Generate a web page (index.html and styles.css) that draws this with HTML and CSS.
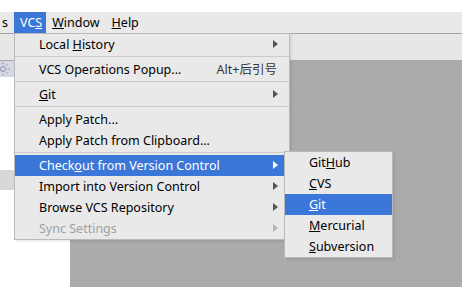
FILE: index.html
```html
<!DOCTYPE html>
<html lang="en">
<head>
  <meta charset="UTF-8">
  <title>VCS menu</title>
<link rel="stylesheet" href="styles.css">
</head>
<body>
  <div class="window">
    <div class="top-gap"></div>
    <div class="menubar">
      <span class="mb-item cut">s</span>
      <span class="mb-item active">VC<u>S</u></span>
      <span class="mb-item"><u>W</u>indow</span>
      <span class="mb-item"><u>H</u>elp</span>
    </div>
    <div class="toolbar"></div>
    <div class="main">
      <div class="project">
        <div class="proj-head">
          <svg width="14" height="14" viewBox="0 0 14 14"><g fill="none" stroke="#8a93a6" stroke-width="1"><circle cx="3" cy="7" r="2.5"/><path d="M3 2.5v-2M3 11.5v2M-1.5 7h-1M7.5 7h2M6.2 3.8l1.4-1.4M6.2 10.2l1.4 1.4"/></g></svg>
        </div>
        <div class="proj-body"></div>
        <div class="proj-sel"></div>
        <div class="proj-body"></div>
      </div>
      <div class="editor"></div>
    </div>

    <div class="menu vcs-menu">
      <div class="item sub">Local <u>H</u>istory</div>
      <div class="sep"></div>
      <div class="item">VCS Operations Popup...<span class="key">Alt+后引号</span></div>
      <div class="sep"></div>
      <div class="item sub"><u>G</u>it</div>
      <div class="sep"></div>
      <div class="item">Apply Patch...</div>
      <div class="item">Apply Patch from Clipboard...</div>
      <div class="sep"></div>
      <div class="item sub selected">Check<u>o</u>ut from Version Control</div>
      <div class="item sub">Import into Version Control</div>
      <div class="item sub">Browse VCS Repository</div>
      <div class="item sub disabled">Sync Settings</div>
    </div>

    <div class="menu sub-menu">
      <div class="item">Git<u>H</u>ub</div>
      <div class="item"><u>C</u>VS</div>
      <div class="item selected"><u>G</u>it</div>
      <div class="item"><u>M</u>ercurial</div>
      <div class="item"><u>S</u>ubversion</div>
    </div>
  </div>
</body>
</html>
```

FILE: styles.css
```css
body { margin: 0; font-family: "Noto Sans", "Noto Sans CJK SC", sans-serif; font-size: 12.5px; color: #000; }
.window { position: relative; width: 462px; height: 287px; overflow: hidden; background: #fff; display: flex; flex-direction: column; }
.top-gap { height: 12px; background: #fff; }
.menubar { height: 21px; background: #e9e9e9; border-bottom: 1px solid #a3a3a3; display: flex; align-items: stretch; }
.mb-item { display: flex; align-items: center; padding: 0 6px; }
.mb-item.cut { padding: 0 6px 0 2px; }
.mb-item.active { background: #3a77d8; color: #fff; padding: 0 4px 0 6px; }
.toolbar { height: 26px; background: #e7e7e7; border-bottom: 1px solid #a9a9a9; }
.main { flex: 1; display: flex; }
.project { width: 70px; background: #fff; display: flex; flex-direction: column; }
.proj-head { height: 16px; background: #d3d8e2; overflow: hidden; }
.proj-head svg { display: block; margin-top: 1px; }
.proj-body { height: 93px; }
.proj-sel { height: 20px; background: #d8d8d8; }
.editor { flex: 1; background: #ababab; }

.menu { position: absolute; background: #e9e9e9; border: 1px solid #b9b9b9; box-shadow: 2px 2px 2px rgba(0,0,0,0.08); }
.vcs-menu { left: 14px; top: 33px; width: 274px; }
.sub-menu { left: 284px; top: 151px; width: 107px; }
.item { position: relative; height: 21px; line-height: 22px; padding-left: 24px; white-space: nowrap; }
.item.selected { background: #3a77d8; color: #fff; }
.item.disabled { color: #a0a0a0; }
.item.sub::after { content: ""; position: absolute; right: 11px; top: 6px; border-left: 5px solid #555; border-top: 4px solid transparent; border-bottom: 4px solid transparent; }
.item.sub.selected::after { border-left-color: #fff; }
.item.sub.disabled::after { border-left-color: #b5b5b5; }
.key { position: absolute; right: 12px; top: 0; color: #333; }
.sep { height: 1px; margin: 1px 0 2px; background: #cacaca; }
```
